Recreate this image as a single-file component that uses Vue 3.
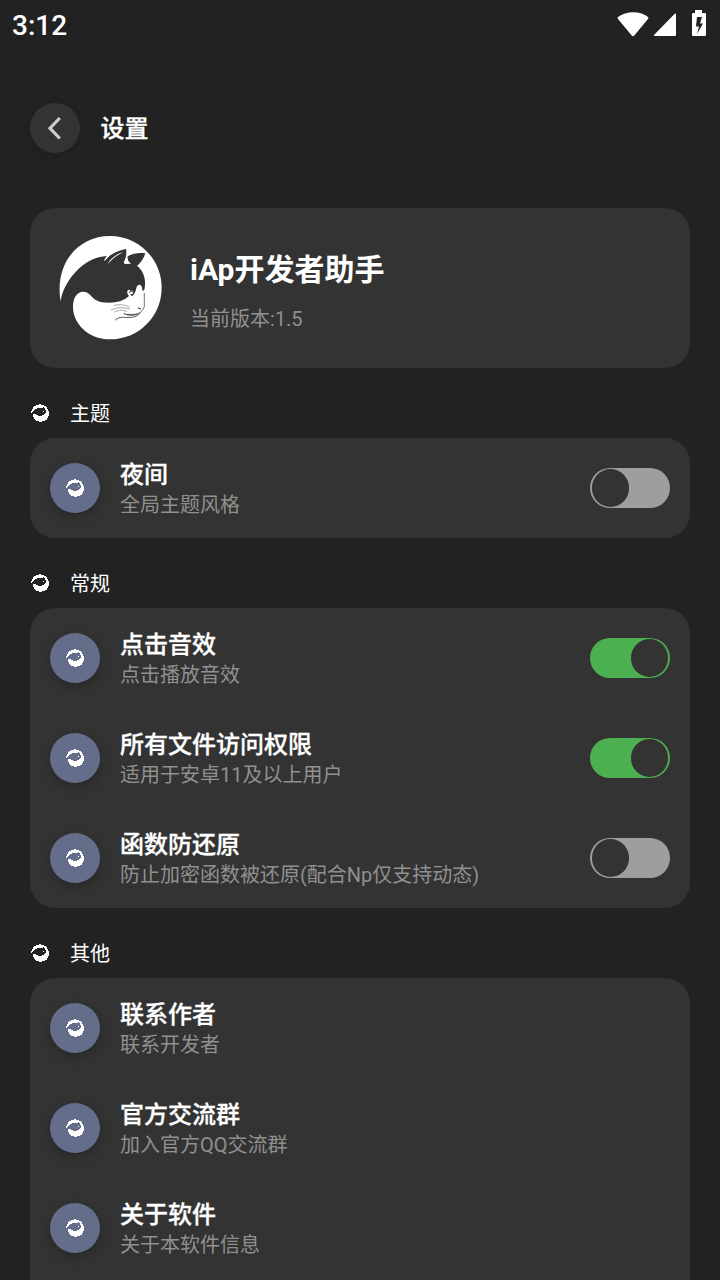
<script setup>
import { h } from 'vue'

const CAT = 'M32 215C12 100 85 18 180 18C266 18 335 87 335 173C335 259 266 328 180 328C112 328 69 278 69 231C69 202 81 186 99 185C118 185 121 199 136 209C148 216 160 218 178 218C202 218 219 213 237 198C230 191 230 181 236 179L249 182L249 191L240 193L246 199C253 194 257 184 259 174C262 163 271 161 275 169L278 183L283 180L285 166C287 147 280 121 261 107C270 102 281 85 286 70C266 67 242 71 232 81L235 93L243 101L225 102L221 98C227 85 231 72 228 57C205 62 180 71 165 92L162 91L170 78C139 80 105 94 76 127C50 155 34 190 32 215Z'

const Cat = () =>
  h('svg', { viewBox: '24 12 324 324' }, [
    h('path', { d: CAT, fill: '#fff' }),
    h('path', { d: 'M173 103C181 84 202 71 220 66C200 77 184 88 173 103Z', fill: '#fff' }),
    h('g', { fill: 'none', stroke: '#333', 'stroke-linecap': 'round' }, [
      h('path', { d: 'M283 190L283 230C279 239 276 246 269 248C261 255 247 253 232 253', 'stroke-width': 2 }),
      h('path', { d: 'M196 270C208 257 224 264 245 262C255 261 265 257 270 249', 'stroke-width': 2.5 }),
      h('path', { d: 'M222 251C232 256 249 258 262 252M264 234L272 237', 'stroke-width': 3 }),
      h('path', { d: 'M193 226C208 222 222 224 238 230M184 240C204 230 221 232 239 237M194 246C207 239 218 239 230 244', 'stroke-width': 1.3 }),
      h('path', { d: 'M240 180L250 185M238 187L244 184', 'stroke-width': 3 }),
    ]),
  ])

const MiniCat = () =>
  h('svg', { viewBox: '0 0 20 20', 'shape-rendering': 'crispEdges' }, [
    h('path', {
      fill: '#fff',
      d: 'M1 10V8H2V6H3V4H4V3H6V2H9V1H11V2H14V3H16V4H17V6H18V8H19V13H18V15H17V17H15V18H12V19H9V18H6V17H5V16H4V14H3V11H6V12H8V13H12V12H14V11H15V10H16V7H15V5H14V4H13V5H7V6H5V7H4V8H3V9H2V10Z',
    }),
    h('path', { fill: '#fff', d: 'M13 8H14V9H13Z' }),
  ])

const sections = [
  { title: '主题', rows: [{ title: '夜间', sub: '全局主题风格', on: false }] },
  {
    title: '常规',
    rows: [
      { title: '点击音效', sub: '点击播放音效', on: true },
      { title: '所有文件访问权限', sub: '适用于安卓11及以上用户', on: true },
      { title: '函数防还原', sub: '防止加密函数被还原(配合Np仅支持动态)', on: false },
    ],
  },
  {
    title: '其他',
    rows: [
      { title: '联系作者', sub: '联系开发者' },
      { title: '官方交流群', sub: '加入官方QQ交流群' },
      { title: '关于软件', sub: '关于本软件信息' },
    ],
  },
]
</script>

<template>
  <main class="screen">
    <div class="status">
      <span class="clock">3:12</span>
      <svg class="indicators" width="96" height="40" viewBox="0 0 96 40">
        <path fill="#fff" d="M1 12C9 5.7 24 5.7 31 12Q32 12.6 31 14L17.3 30.5Q16 32 14.7 30.5L1 14Q0 12.6 1 12Z" />
        <path fill="#fff" d="M59 9.5V30Q59 31 58 31H38Q36 31 37.5 29.5L57.5 9Q59 8 59 9.5Z" />
        <path fill="#fff" fill-rule="evenodd" transform="translate(-1 0)" d="M79 5H86V8H89Q90 8 90 9V30Q90 31 89 31H77Q76 31 76 30V9Q76 8 77 8H79ZM81 12L80 21.5H83L81 29L87 18.5H84L86 12Z" />
      </svg>
    </div>
    <header class="bar">
      <div class="back">
        <svg width="50" height="50" viewBox="0 0 50 50"><path d="M29.8 15L20 25.2L29.8 35.5" fill="none" stroke="#ccc" stroke-width="3.2" /></svg>
      </div>
      <h1>设置</h1>
    </header>
    <section class="card app">
      <Cat class="logo" />
      <div class="info">
        <h2>iAp开发者助手</h2>
        <p>当前版本:1.5</p>
      </div>
    </section>
    <template v-for="s in sections" :key="s.title">
      <div class="heading"><MiniCat class="mini" /><span>{{ s.title }}</span></div>
      <section class="card">
        <div v-for="r in s.rows" :key="r.title" class="row">
          <div class="badge"><MiniCat class="mini" /></div>
          <div class="text">
            <h3>{{ r.title }}</h3>
            <p>{{ r.sub }}</p>
          </div>
          <div v-if="r.on !== undefined" class="switch" :class="{ on: r.on }"><i></i></div>
        </div>
      </section>
    </template>
  </main>
</template>

<style>
html, body { background: #222; overflow: hidden; }
</style>

<style scoped>
.screen { box-sizing: border-box; width: 720px; height: 1280px; overflow: hidden; padding: 0 30px; background: #222; color: #fff; font-family: Roboto, "Noto Sans CJK SC", sans-serif; }
h1, h2, h3, p { margin: 0; white-space: nowrap; }
svg { display: block; }
.status { height: 48px; margin: 0 -18px; display: flex; justify-content: space-between; }
.clock { font-size: 28px; font-weight: 500; line-height: 52px; }
.indicators { width: 96px; height: 40px; flex: none; margin: 5px -5px 0 0; }
.bar { height: 160px; display: flex; align-items: center; gap: 20px; }
.back { width: 50px; height: 50px; border-radius: 50%; background: #333; box-shadow: 0 2px 8px rgba(0,0,0,.15); }
h1 { font-size: 24px; font-weight: 500; line-height: 34px; padding: 2px 0 0 .4px; -webkit-text-stroke: .3px #fff; }
.card { border-radius: 25px; background: #333; }
.card:last-child { height: 400px; }
.app { height: 160px; display: flex; align-items: center; }
.logo { width: 108px; height: 108px; margin-left: 28px; }
.info { margin-left: 24px; padding-top: 6px; }
h2 { font-size: 30px; font-weight: 700; line-height: 44px; }
.info p { font-size: 20px; line-height: 30px; margin-top: 12px; color: #909090; }
.heading { height: 70px; display: flex; align-items: center; padding-top: 20px; box-sizing: border-box; font-size: 20px; gap: 20px; }
.heading span { line-height: 30px; padding-top: 2px; }
.mini { width: 20px; height: 20px; }
.row { height: 100px; display: flex; align-items: center; padding: 0 20px; }
.badge { width: 50px; height: 50px; border-radius: 50%; background: #646e8b; display: flex; align-items: center; justify-content: center; box-shadow: 0 4px 12px rgba(0,0,0,.22); }
.text { flex: 1; margin-left: 20px; padding-top: 2px; }
h3 { font-size: 24px; font-weight: 500; line-height: 32px; -webkit-text-stroke: .3px #fff; }
.text p { font-size: 20px; line-height: 28px; color: #909090; }
.switch { box-sizing: border-box; width: 80px; height: 40px; padding: 1.2px 1.7px; border-radius: 20px; background: #9e9e9e; display: flex; }
.switch i { width: 37.5px; height: 37.5px; border-radius: 50%; background: #333; }
.switch.on { background: #4caf50; justify-content: flex-end; }
</style>
